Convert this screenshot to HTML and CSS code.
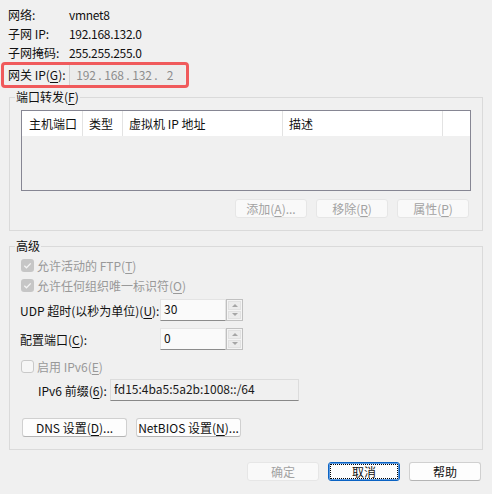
FILE: index.html
```html
<!DOCTYPE html>
<html lang="zh-CN">
<head>
<meta charset="utf-8">
<title>NAT 设置</title>
<link rel="stylesheet" href="styles.css">
</head>
<body>
<div class="dialog">
  <div class="info">
    <div class="row"><span class="lbl">网络:</span><span class="val">vmnet8</span></div>
    <div class="row"><span class="lbl">子网 IP:</span><span class="val">192.168.132.0</span></div>
    <div class="row"><span class="lbl">子网掩码:</span><span class="val">255.255.255.0</span></div>
  </div>

  <div class="gateway">
    <span class="lbl">网关 IP(<u>G</u>):</span>
    <div class="ipfield">
      <span class="oct">192</span><span class="dot">.</span>
      <span class="oct">168</span><span class="dot">.</span>
      <span class="oct">132</span><span class="dot">.</span>
      <span class="oct">2</span>
    </div>
  </div>

  <fieldset class="group pf">
    <legend>端口转发(<u>F</u>)</legend>
    <div class="table">
      <div class="thead">
        <div class="th">主机端口</div>
        <div class="th">类型</div>
        <div class="th">虚拟机 IP 地址</div>
        <div class="th">描述</div>
        <div class="th"></div>
      </div>
      <div class="tbody"></div>
    </div>
    <div class="btnrow">
      <button class="btn off">添加(<u>A</u>)...</button>
      <button class="btn off">移除(<u>R</u>)</button>
      <button class="btn off">属性(<u>P</u>)</button>
    </div>
  </fieldset>

  <fieldset class="group adv">
    <legend>高级</legend>
    <div class="check off">
      <svg class="box" width="13" height="13" viewBox="0 0 13 13"><rect x="0" y="0" width="13" height="13" rx="3" fill="#c6c6c6"/><polyline points="3.3,6.7 5.5,8.8 9.7,4.4" fill="none" stroke="#f4f4f4" stroke-width="1.3"/></svg>
      <span>允许活动的 FTP(<u>T</u>)</span>
    </div>
    <div class="check off">
      <svg class="box" width="13" height="13" viewBox="0 0 13 13"><rect x="0" y="0" width="13" height="13" rx="3" fill="#c6c6c6"/><polyline points="3.3,6.7 5.5,8.8 9.7,4.4" fill="none" stroke="#f4f4f4" stroke-width="1.3"/></svg>
      <span>允许任何组织唯一标识符(<u>O</u>)</span>
    </div>

    <div class="field udp">
      <span class="flbl">UDP 超时(以秒为单位)(<u>U</u>):</span>
      <div class="spin">
        <div class="spin-input">30</div>
        <div class="spin-btns">
          <div class="sb"><span class="tri up"></span></div>
          <div class="sb"><span class="tri down"></span></div>
        </div>
      </div>
    </div>
    <div class="field cfg">
      <span class="flbl">配置端口(<u>C</u>):</span>
      <div class="spin">
        <div class="spin-input">0</div>
        <div class="spin-btns">
          <div class="sb"><span class="tri up"></span></div>
          <div class="sb"><span class="tri down"></span></div>
        </div>
      </div>
    </div>

    <div class="check off v6">
      <svg class="box" width="13" height="13" viewBox="0 0 13 13"><rect x="0.5" y="0.5" width="12" height="12" rx="2.5" fill="#f6f6f6" stroke="#c9c9c9"/></svg>
      <span>启用 IPv6(<u>E</u>)</span>
    </div>

    <div class="prefix">
      <span class="plbl">IPv6 前缀(<u>6</u>):</span>
      <div class="pinput">fd15:4ba5:5a2b:1008::/64</div>
    </div>

    <div class="dnsrow">
      <button class="btn wide">DNS 设置(<u>D</u>)...</button>
      <button class="btn wide">NetBIOS 设置(<u>N</u>)...</button>
    </div>
  </fieldset>

  <div class="footer">
    <button class="btn off">确定</button>
    <button class="btn focus"><span>取消</span></button>
    <button class="btn">帮助</button>
  </div>
</div>
</body>
</html>
```

FILE: styles.css
```css
* {
  box-sizing: border-box;
}

html,
body {
  margin: 0;
}

body {
  width: 492px;
  height: 494px;
  overflow: hidden;
  background: #f0f0f0;
  color: #111;
  font-family: "Noto Sans CJK SC", "Noto Sans", sans-serif;
  font-size: 12px;
}

u {
  text-decoration-thickness: 1px;
  text-underline-offset: 2px;
}

.dialog {
  padding-top: 5px;
}

/* network summary */
.info {
  padding-left: 8px;
}

.row {
  display: flex;
  height: 19px;
  line-height: 19px;
}

.lbl {
  width: 61px;
  flex: none;
}

.val {
  letter-spacing: -0.3px;
}

/* highlighted gateway row */
.gateway {
  display: flex;
  width: 188px;
  height: 26px;
  margin-left: 1px;
  padding: 0 1px 0 4px;
  border: 3px solid #f05a5c;
  border-radius: 4px;
  line-height: 20px;
}

.ipfield {
  flex: 1;
  display: flex;
  padding-left: 4px;
  background: #ececec;
  border-left: 1px solid #d2d2d2;
  color: #8e8e8e;
}

.oct {
  width: 24px;
  text-align: center;
  letter-spacing: -0.2px;
}

.dot {
  width: 4px;
  text-align: center;
}

/* group boxes */
.group {
  width: 474px;
  margin: 0 0 0 9px;
  min-width: 0;
  border: 1px solid #dadada;
}

.group legend {
  margin-left: -6px;
  padding: 0 1px;
  line-height: 16px;
}

.pf {
  margin-top: 1px;
  padding: 5px 11px 12px 11px;
}

.adv {
  margin-top: 7px;
  padding: 1px 11px 12px 11px;
}

/* port forwarding list */
.table {
  height: 81px;
  border: 1px solid #868693;
  background: #f0f0f0;
  display: flex;
  flex-direction: column;
}

.thead {
  display: flex;
  height: 25px;
  background: #fff;
  line-height: 25px;
}

.th {
  padding-left: 6px;
  border-right: 1px solid #e3e3e3;
  white-space: nowrap;
}

.th:nth-child(1) { width: 61px; padding-left: 7px; }
.th:nth-child(2) { width: 40px; }
.th:nth-child(3) { width: 160px; }
.th:nth-child(4) { width: 160px; }
.th:nth-child(5) { flex: 1; border-right: none; }

.btnrow {
  display: flex;
  justify-content: flex-end;
  gap: 9px;
  margin-top: 8px;
  padding-right: 2px;
}

/* push buttons */
.btn {
  width: 72px;
  height: 19px;
  padding: 0;
  border: 1px solid #d0d0d0;
  border-bottom-color: #b4b4b4;
  border-radius: 3px;
  background: #fdfdfd;
  color: #111;
  font: inherit;
  line-height: 16px;
  white-space: nowrap;
}

.btn.off {
  border-color: #e6e6e6;
  background: #f9f9f9;
  color: #a2a2a2;
}

.btn.focus {
  border-color: #0a63c4;
  box-shadow: inset 0 0 0 1px #5e9be0;
  outline: 1px dotted #000;
  outline-offset: -3px;
}

/* check boxes */
.check {
  display: flex;
  align-items: center;
  gap: 3px;
  height: 20px;
  color: #999;
}

.check .box {
  flex: none;
}

.check.v6 {
  margin-top: 6px;
}

/* labelled spin fields */
.field {
  display: flex;
  align-items: center;
  height: 22px;
}

.field.udp {
  margin-top: 4px;
}

.field.cfg {
  margin-top: 7px;
}

.flbl {
  width: 140px;
  margin-left: -1px;
  white-space: nowrap;
}

.spin {
  display: flex;
  width: 83px;
  height: 22px;
}

.spin-input {
  width: 66px;
  padding-left: 3px;
  background: #fafafa;
  border: 1px solid #e4e4e4;
  border-bottom-color: #8c8c8c;
  line-height: 18px;
}

.spin-btns {
  width: 17px;
  display: flex;
  flex-direction: column;
  gap: 1px;
  padding: 1px;
  border: 1px solid #c0c0c0;
  background: #f4f4f4;
}

.sb {
  flex: 1;
  display: flex;
  align-items: center;
  justify-content: center;
  background: #ececec;
  border: 1px solid #e1e1e1;
}

.tri {
  width: 0;
  height: 0;
  border-left: 3px solid transparent;
  border-right: 3px solid transparent;
}

.tri.up {
  border-bottom: 3px solid #a6a6a6;
}

.tri.down {
  border-top: 3px solid #a6a6a6;
}

/* IPv6 prefix */
.prefix {
  display: flex;
  align-items: center;
  height: 22px;
  margin-top: 3px;
  padding-left: 17px;
}

.plbl {
  width: 72px;
  white-space: nowrap;
}

.pinput {
  width: 189px;
  height: 22px;
  padding-left: 3px;
  background: #f0f0f0;
  border: 1px solid #dcdcdc;
  border-bottom-color: #888;
  line-height: 18px;
  color: #1a1a1a;
}

.dnsrow {
  display: flex;
  gap: 9px;
  margin-top: 17px;
  padding-left: 1px;
}

.btn.wide {
  width: 105px;
}

/* dialog buttons */
.footer {
  display: flex;
  justify-content: flex-end;
  gap: 9px;
  margin-top: 12px;
  padding-right: 11px;
}
```
